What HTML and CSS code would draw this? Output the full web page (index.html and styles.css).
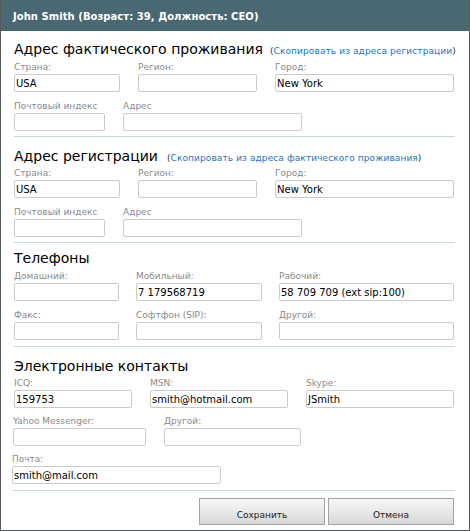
FILE: index.html
```html
<!DOCTYPE html>
<html lang="ru">
<head>
<meta charset="utf-8">
<title>John Smith</title>
<link rel="stylesheet" href="styles.css">
</head>
<body>
<div class="window">
  <div class="titlebar">John Smith (Возраст: 39, Должность: CEO)</div>
  <div class="content">

    <section class="group g1">
      <h2 class="heading">Адрес фактического проживания<span class="copy copy-near"><span class="paren">(</span><a href="#">Скопировать из адреса регистрации</a><span class="paren">)</span></span></h2>
      <div class="row row-first gap18">
        <div class="field w106"><div class="label">Страна:</div><div class="input">USA</div></div>
        <div class="field w119"><div class="label">Регион:</div><div class="input"></div></div>
        <div class="field w179"><div class="label">Город:</div><div class="input">New York</div></div>
      </div>
      <div class="row row-next gap18">
        <div class="field w91"><div class="label">Почтовый индекс</div><div class="input"></div></div>
        <div class="field w179"><div class="label">Адрес</div><div class="input"></div></div>
      </div>
      <div class="sep sep-5"></div>
    </section>

    <section class="group g2">
      <h2 class="heading">Адрес регистрации<span class="copy copy-far"><span class="paren">(</span><a href="#">Скопировать из адреса фактического проживания</a><span class="paren">)</span></span></h2>
      <div class="row row-first-tight gap18">
        <div class="field w106"><div class="label">Страна:</div><div class="input">USA</div></div>
        <div class="field w119"><div class="label">Регион:</div><div class="input"></div></div>
        <div class="field w179"><div class="label">Город:</div><div class="input">New York</div></div>
      </div>
      <div class="row row-next gap18">
        <div class="field w91"><div class="label">Почтовый индекс</div><div class="input"></div></div>
        <div class="field w179"><div class="label">Адрес</div><div class="input"></div></div>
      </div>
      <div class="sep sep-5"></div>
    </section>

    <section class="group g3">
      <h2 class="heading">Телефоны</h2>
      <div class="row row-first gap17">
        <div class="field w105"><div class="label">Домашний:</div><div class="input"></div></div>
        <div class="field w126"><div class="label">Мобильный:</div><div class="input">7 179568719</div></div>
        <div class="field w175"><div class="label">Рабочий:</div><div class="input">58 709 709 (ext sip:100)</div></div>
      </div>
      <div class="row row-next gap17">
        <div class="field w105"><div class="label">Факс:</div><div class="input"></div></div>
        <div class="field w126"><div class="label">Софтфон (SIP):</div><div class="input"></div></div>
        <div class="field w175"><div class="label">Другой:</div><div class="input"></div></div>
      </div>
      <div class="sep sep-6"></div>
    </section>

    <section class="group g4">
      <h2 class="heading">Электронные контакты</h2>
      <div class="row row-first-tight gap18">
        <div class="field w118"><div class="label">ICQ:</div><div class="input">159753</div></div>
        <div class="field w138"><div class="label">MSN:</div><div class="input">smith@hotmail.com</div></div>
        <div class="field w148"><div class="label">Skype:</div><div class="input">JSmith</div></div>
      </div>
      <div class="row row-next7 gap18 shift1">
        <div class="field w133"><div class="label">Yahoo Messenger:</div><div class="input"></div></div>
        <div class="field w137"><div class="label">Другой:</div><div class="input"></div></div>
      </div>
      <div class="row row-next7 shift2">
        <div class="field w209"><div class="label">Почта:</div><div class="input">smith@mail.com</div></div>
      </div>
      <div class="sep sep-6 shift2"></div>
    </section>

    <div class="actions">
      <button class="btn" type="button">Сохранить</button>
      <button class="btn" type="button">Отмена</button>
    </div>

  </div>
</div>
</body>
</html>
```

FILE: styles.css
```css
html, body {
  margin: 0;
  padding: 0;
  background: #ffffff;
}

.window {
  width: 470px;
  height: 531px;
  box-sizing: border-box;
  border: 1px solid #555a5c;
  border-top: none;
  background: #ffffff;
  font-family: "DejaVu Sans", Verdana, sans-serif;
  overflow: hidden;
}

.titlebar {
  height: 31px;
  box-sizing: border-box;
  margin: 0 -1px;
  padding: 2px 0 0 13px;
  line-height: 29px;
  background: #4a6872;
  color: #ffffff;
  font-weight: bold;
  font-size: 10px;
  letter-spacing: 0.05px;
  white-space: nowrap;
}

.content {
  padding: 0 15px 0 13px;
}

.heading {
  margin: 0;
  height: 18px;
  line-height: 18px;
  font-size: 14px;
  font-weight: normal;
  color: #000000;
  white-space: nowrap;
}

.g1 .heading { margin-top: 9px; }
.g2 .heading { margin-top: 10px; }
.g3 .heading { margin-top: 6px; }
.g4 .heading { margin-top: 10px; }

.copy {
  font-size: 9px;
  letter-spacing: 0.1px;
}
.copy-near { margin-left: 7px; }
.copy-far { margin-left: 9px; }

.paren {
  color: #1d2f4a;
}

.copy a {
  color: #2474bd;
  text-decoration: none;
}

.row {
  display: flex;
}
.row-first { margin-top: 3px; }
.row-first-tight { margin-top: 2px; }
.row-next { margin-top: 8px; }
.row-next7 { margin-top: 7px; }

.gap17 { gap: 17px; }
.gap18 { gap: 18px; }

.shift1 { margin-left: -1px; }
.shift2 { margin-left: -2px; }

.field {
  display: flex;
  flex-direction: column;
}

.w91 { width: 91px; }
.w105 { width: 105px; }
.w106 { width: 106px; }
.w118 { width: 118px; }
.w119 { width: 119px; }
.w126 { width: 126px; }
.w133 { width: 133px; }
.w137 { width: 137px; }
.w138 { width: 138px; }
.w148 { width: 148px; }
.w175 { width: 175px; }
.w179 { width: 179px; }
.w209 { width: 209px; }

.label {
  height: 13px;
  line-height: 13px;
  font-size: 9px;
  color: #8a8a8a;
  white-space: nowrap;
}

.input {
  height: 18px;
  box-sizing: border-box;
  border: 1px solid #cbcbcb;
  border-radius: 2px;
  padding: 2px 1px 0;
  line-height: 14px;
  font-size: 10px;
  color: #000000;
  background: #ffffff;
  white-space: nowrap;
  overflow: hidden;
}

.sep {
  height: 1px;
  background: #c6dadd;
  margin-right: -1px;
}
.sep-5 { margin-top: 5px; }
.sep-6 { margin-top: 6px; }
.sep.shift2 { margin-left: -2px; }

.actions {
  display: flex;
  justify-content: flex-end;
  gap: 3px;
  margin-top: 7px;
}

.btn {
  width: 126px;
  height: 27px;
  box-sizing: border-box;
  margin: 0;
  padding: 6px 0 0;
  border: 1px solid #a3a3a3;
  border-radius: 0;
  background: linear-gradient(#f7f7f7, #e9e9e9 50%, #d6d6d6);
  font-family: "DejaVu Sans", Verdana, sans-serif;
  font-size: 9px;
  line-height: 18px;
  color: #1a1a1a;
  text-align: center;
  vertical-align: top;
}
```
